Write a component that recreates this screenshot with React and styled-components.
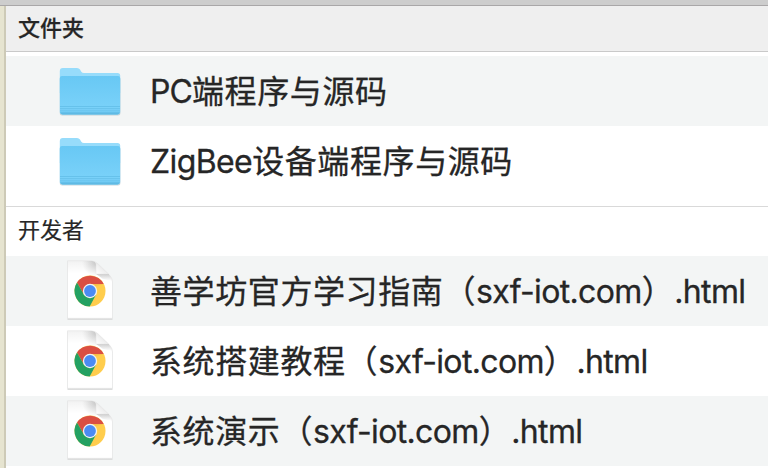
import React from 'react';
import styled, { createGlobalStyle } from 'styled-components';

const GlobalStyle = createGlobalStyle`
  *, *::before, *::after { box-sizing: border-box; }
  html, body { margin: 0; padding: 0; overflow: hidden; }
`;

const Window = styled.div`
  display: flex;
  flex-direction: column;
  width: 768px;
  height: 468px;
  overflow: hidden;
  background: #fff;
  color: #262626;
  font-family: Inter, 'Noto Sans CJK SC', sans-serif;
`;

const TopEdge = styled.div`
  flex: none;
  height: 6px;
  background: #cdcdcd;
  border-bottom: 1px solid #a9a7a8;
`;

const Body = styled.div`
  display: flex;
  flex: 1;
  min-height: 0;
`;

const SideEdge = styled.div`
  flex: none;
  width: 6px;
  background: #e6e4d0;
  border-right: 2px solid #cdcab7;
`;

const Content = styled.main`
  flex: 1;
  min-width: 0;
`;

const Section = styled.section`
  padding-bottom: ${(p) => (p.$spaced ? '10px' : '0')};
`;

const SectionTitle = styled.h2`
  margin: 0 0 ${(p) => (p.$pinned ? '4px' : '0')};
  height: ${(p) => (p.$pinned ? '46px' : '50px')};
  padding-left: 12px;
  line-height: ${(p) => (p.$pinned ? '44px' : '46px')};
  font-size: 22px;
  font-weight: ${(p) => (p.$pinned ? 500 : 400)};
  -webkit-text-stroke: 0.2px #262626;
  background: ${(p) => (p.$pinned ? '#efefef' : '#fff')};
  border-top: ${(p) => (p.$pinned ? 'none' : '1px solid #d9d9d9')};
  border-bottom: ${(p) => (p.$pinned ? '1px solid #c9c9c9' : 'none')};
`;

const List = styled.ul`
  margin: 0;
  padding: 0;
  list-style: none;
`;

const Row = styled.li`
  display: flex;
  align-items: center;
  height: 70px;
  padding-left: 50px;
  background: ${(p) => (p.$shaded ? '#f3f5f5' : '#fff')};
`;

const IconBox = styled.span`
  display: flex;
  flex: none;
  justify-content: center;
  width: 68px;
  margin-right: 26px;
`;

const Name = styled.span`
  display: flex;
  align-items: baseline;
  padding-bottom: 2px;
  line-height: 68px;
  white-space: pre;
  font-size: 32px;
  -webkit-text-stroke: 0.3px #262626;
`;

const Han = styled.span`
  font-family: 'Noto Sans CJK SC', sans-serif;
  font-size: 32px;
  letter-spacing: 0.6px;
`;

const Latin = styled.span`
  font-family: Inter, sans-serif;
  font-size: 32px;
  letter-spacing: ${(p) => p.$tracking}px;
`;

function FolderIcon() {
  return (
    <svg width="68" height="56" viewBox="0 0 68 56">
      <defs>
        <linearGradient id="folderFront" x1="0" y1="0" x2="0" y2="1">
          <stop offset="0" stopColor="#68c8f4" />
          <stop offset="1" stopColor="#7dd3fa" />
        </linearGradient>
      </defs>
      <rect x="3.8" y="14" width="60.6" height="38.4" rx="2.5" fill="#9fb3bd" opacity="0.55" />
      <path d="M3.8 8.2Q3.8 5 6.8 5H21Q23 5 24 6.6L25.3 8.8Q26.2 10 28 10H61.5Q64.2 10 64.2 12.5V30H3.8Z" fill="#97dcfb" />
      <path d="M3.8 15Q3.8 13 6 13H62Q64.2 13 64.2 15V48.7Q64.2 51.4 61.5 51.4H6.5Q3.8 51.4 3.8 48.7Z" fill="url(#folderFront)" />
      <path d="M4 43.5H64M4 45.7H64M4 47.9H64" stroke="#64bfe9" strokeWidth="0.9" />
      <path d="M4.1 49.3H63.9Q63.2 51.4 61.5 51.4H6.5Q4.8 51.4 4.1 49.3Z" fill="#5fbae4" />
    </svg>
  );
}

function HtmlFileIcon() {
  return (
    <svg width="48" height="62" viewBox="0 0 48 62">
      <defs>
        <linearGradient id="pageFill" x1="0" y1="0" x2="0" y2="1">
          <stop offset="0" stopColor="#f2f2f2" />
          <stop offset="0.22" stopColor="#fff" />
        </linearGradient>
        <linearGradient id="pageFold" x1="0.5" y1="0.5" x2="0" y2="1">
          <stop offset="0" stopColor="#eeeeee" />
          <stop offset="1" stopColor="#fff" />
        </linearGradient>
        <radialGradient id="foldShade" gradientUnits="userSpaceOnUse" cx="31" cy="2" r="15">
          <stop offset="0" stopColor="#a6a6a6" stopOpacity="0.65" />
          <stop offset="1" stopColor="#bbb" stopOpacity="0" />
        </radialGradient>
        <linearGradient id="foldUnder" x1="0" y1="0" x2="0" y2="1">
          <stop offset="0" stopColor="#aaa" stopOpacity="0.6" />
          <stop offset="1" stopColor="#bbb" stopOpacity="0" />
        </linearGradient>
      </defs>
      <path d="M1.5 1.5H25Q29 1.5 32 4.5L43 15Q46.5 18.5 46.5 22V59.9H1.5Z" fill="#dcdddd" />
      <path d="M1.5 .8H25Q29 .8 32 3.8L43 14.3Q46.5 17.8 46.5 22V58.3H1.5Z" fill="url(#pageFill)" stroke="#e2e3e3" strokeWidth="0.6" />
      <path d="M14 1.1H26Q29.5 1.8 30 4V17H14Z" fill="url(#foldShade)" />
      <path d="M30 14H42.5Q46 18 46 21L37 19Z" fill="url(#foldUnder)" />
      <path d="M30 3Q32 4 33.5 5.8L42 13.8Q40 14 37 14H30Z" fill="url(#pageFold)" stroke="#dedede" strokeWidth="0.4" />
      <g transform="translate(24 31)">
        <circle r="15.5" fill="#ffcd4d" />
        <path d="M0-7H13.7A15.5 15.5 0 0 0-13-8.4L-6.1 3.5Z" fill="#da4e43" />
        <path d="M-13-8.4A15.5 15.5 0 0 0-.3 15.5L6.1 3.5L-6.1 3.5Z" fill="#24a162" />
        <path d="M0-7H13.7L5 -5Z" fill="#e8a33f" opacity="0.4" />
        <circle r="7.2" fill="#f2f3f2" />
        <circle r="5.9" fill="#4b8bf4" />
      </g>
    </svg>
  );
}

function Entry({ icon, shaded, children }) {
  return (
    <Row $shaded={shaded}>
      <IconBox>{icon}</IconBox>
      <Name>{children}</Name>
    </Row>
  );
}

const pages = ['善学坊官方学习指南', '系统搭建教程', '系统演示'];

export default function App() {
  return (
    <Window>
      <GlobalStyle />
      <TopEdge />
      <Body>
        <SideEdge />
        <Content>
          <Section $spaced>
            <SectionTitle $pinned>文件夹</SectionTitle>
            <List>
              <Entry icon={<FolderIcon />} shaded>
                <Latin $tracking={-0.9}>PC</Latin>
                <Han>端程序与源码</Han>
              </Entry>
              <Entry icon={<FolderIcon />}>
                <Latin $tracking={-0.6}>ZigBee</Latin>
                <Han>设备端程序与源码</Han>
              </Entry>
            </List>
          </Section>
          <Section>
            <SectionTitle>开发者</SectionTitle>
            <List>
              {pages.map((title, i) => (
                <Entry key={title} icon={<HtmlFileIcon />} shaded={i % 2 === 0}>
                  <Han>{title}（</Han>
                  <Latin $tracking={-0.65}>sxf-iot.com</Latin>
                  <Han>）</Han>
                  <Latin $tracking={-0.65}>.html</Latin>
                </Entry>
              ))}
            </List>
          </Section>
        </Content>
      </Body>
    </Window>
  );
}
